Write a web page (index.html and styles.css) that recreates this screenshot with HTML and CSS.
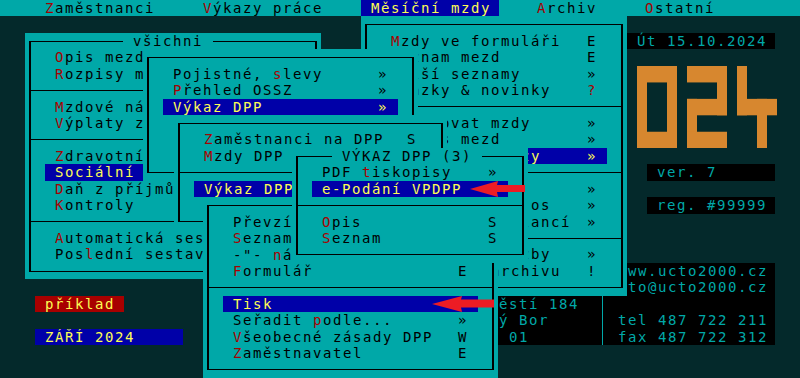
FILE: index.html
```html
<!DOCTYPE html>
<html lang="cs">
<head>
    <meta charset="UTF-8">
    <title>Mzdy - Výkaz DPP</title>
    <link rel="stylesheet" href="styles.css">
</head>
<body>
<div class="screen">
    <nav class="menubar">
        <span class="menu-item"><span class="hot">Z</span>aměstnanci</span>
        <span class="menu-item"><span class="hot">V</span>ýkazy práce</span>
        <span class="menu-item open">Měsíční mzdy</span>
        <span class="menu-item"><span class="hot">A</span>rchiv</span>
        <span class="menu-item"><span class="hot">O</span>statní</span>
    </nav>

    <!-- desktop -->
    <div class="date-box">Út 15.10.2024</div>
    <svg class="logo" viewBox="0 0 14 5" preserveAspectRatio="none">
        <g fill="#d7872f">
            <!-- 0 -->
            <rect x="0" y="0" width="4" height="1"/>
            <rect x="0" y="4" width="4" height="1"/>
            <rect x="0" y="0" width="1" height="5"/>
            <rect x="3" y="0" width="1" height="5"/>
            <!-- 2 -->
            <rect x="5" y="0" width="4" height="1"/>
            <rect x="8" y="0" width="1" height="3"/>
            <rect x="5" y="2" width="4" height="1"/>
            <rect x="5" y="2" width="1" height="3"/>
            <rect x="5" y="4" width="4" height="1"/>
            <!-- 4 -->
            <rect x="10" y="0" width="1" height="3"/>
            <rect x="10" y="2" width="4" height="1"/>
            <rect x="12" y="2" width="1" height="3"/>
        </g>
    </svg>
    <div class="tag tag-ver">ver. 7</div>
    <div class="tag tag-reg">reg. #99999</div>

    <div class="badge badge-example">příklad</div>
    <div class="badge badge-month">ZÁŘÍ 2024</div>

    <div class="info">
        <div class="info-addr">
            <div class="line">ÚČTO 2000</div>
            <div class="line">s.r.o.</div>
            <div class="line">Náměstí 184</div>
            <div class="line">Nový Bor</div>
            <div class="line">473 01</div>
        </div>
        <div class="info-contact">
            <div class="line">www.ucto2000.cz</div>
            <div class="line">ucto@ucto2000.cz</div>
            <div class="line"></div>
            <div class="line">tel 487 722 211</div>
            <div class="line">fax 487 722 312</div>
        </div>
    </div>

    <!-- Měsíční mzdy -->
    <div class="win win-mesicni">
        <div class="frame">
            <div class="item"><span class="lbl"><span class="hot">M</span>zdy ve formuláři</span><span class="key">E</span></div>
            <div class="item"><span class="lbl"><span class="hot">S</span>eznam mezd</span><span class="key">E</span></div>
            <div class="item"><span class="lbl"><span class="hot">D</span>alší seznamy</span><span class="key">»</span></div>
            <div class="item"><span class="lbl"><span class="hot">U</span>kázky &amp; novinky</span><span class="key hot">?</span></div>
            <div class="sep"></div>
            <div class="item"><span class="lbl"><span class="hot">Z</span>pracovat mzdy</span><span class="key">»</span></div>
            <div class="item"><span class="lbl"><span class="hot">R</span>ozpis mezd</span><span class="key">»</span></div>
            <div class="item sel"><span class="lbl">Hromadné výkazy</span><span class="key">»</span></div>
            <div class="sep"></div>
            <div class="item"><span class="lbl"><span class="hot">E</span>xport dat</span><span class="key">»</span></div>
            <div class="item"><span class="lbl">Srážky a záp. os</span><span class="key">»</span></div>
            <div class="item"><span class="lbl">Doklad z ambulancí</span><span class="key">»</span></div>
            <div class="sep"></div>
            <div class="item"><span class="lbl">Systémové služby</span><span class="key">»</span></div>
            <div class="item"><span class="lbl">Přenos do archivu</span><span class="key">!</span></div>
        </div>
    </div>

    <!-- všichni -->
    <div class="win win-vsichni">
        <div class="frame">
            <span class="title">všichni</span>
            <div class="item"><span class="lbl"><span class="hot">O</span>pis mezd</span></div>
            <div class="item"><span class="lbl"><span class="hot">R</span>ozpisy mezd</span></div>
            <div class="sep"></div>
            <div class="item"><span class="lbl"><span class="hot">M</span>zdové náklady</span></div>
            <div class="item"><span class="lbl"><span class="hot">V</span>ýplaty zaměstnancům</span></div>
            <div class="sep"></div>
            <div class="item"><span class="lbl"><span class="hot">Z</span>dravotní pojištění</span></div>
            <div class="item sel"><span class="lbl">Sociální pojištění</span></div>
            <div class="item"><span class="lbl"><span class="hot">D</span>aň z příjmů</span></div>
            <div class="item"><span class="lbl"><span class="hot">K</span>ontroly</span></div>
            <div class="sep"></div>
            <div class="item"><span class="lbl"><span class="hot">A</span>utomatická sestava</span></div>
            <div class="item"><span class="lbl">Pos<span class="hot">l</span>ední sestavy</span></div>
        </div>
    </div>

    <!-- Sociální pojištění -->
    <div class="win win-pojistne">
        <div class="frame">
            <div class="item"><span class="lbl">Pojistné, <span class="hot">s</span>levy</span><span class="key">»</span></div>
            <div class="item"><span class="lbl"><span class="hot">P</span>řehled OSSZ</span><span class="key">»</span></div>
            <div class="item sel"><span class="lbl">Výkaz DPP</span><span class="key">»</span></div>
            <div class="item"></div>
            <div class="item"></div>
            <div class="item"></div>
        </div>
    </div>

    <!-- Výkaz DPP -->
    <div class="win win-dpp">
        <div class="frame">
            <div class="item"><span class="lbl"><span class="hot">Z</span>aměstnanci na DPP</span><span class="key">S</span></div>
            <div class="item"><span class="lbl"><span class="hot">M</span>zdy DPP</span><span class="key">S</span></div>
            <div class="sep"></div>
            <div class="item sel"><span class="lbl">Výkaz DPP</span></div>
            <div class="item"></div>
        </div>
    </div>

    <!-- tisk výkazu -->
    <div class="win win-tisk">
        <div class="frame">
            <div class="item"><span class="lbl">Převzít údaje</span></div>
            <div class="item"><span class="lbl"><span class="hot">S</span>eznam</span></div>
            <div class="item"><span class="lbl">-"- <span class="hot">n</span>áhled</span></div>
            <div class="item"><span class="lbl"><span class="hot">F</span>ormulář</span><span class="key">E</span></div>
            <div class="sep"></div>
            <div class="item sel"><span class="lbl">Tisk</span></div>
            <div class="item"><span class="lbl">Seřadit <span class="hot">p</span>odle...</span><span class="key">»</span></div>
            <div class="item"><span class="lbl"><span class="hot">V</span>šeobecné zásady DPP</span><span class="key">W</span></div>
            <div class="item"><span class="lbl"><span class="hot">Z</span>aměstnavatel</span><span class="key">E</span></div>
        </div>
    </div>

    <!-- VÝKAZ DPP (3) -->
    <div class="win win-vykaz">
        <div class="frame">
            <span class="title">VÝKAZ DPP (3)</span>
            <div class="item"><span class="lbl">PDF <span class="hot">t</span>iskopisy</span><span class="key">»</span></div>
            <div class="item sel"><span class="lbl">e-Podání VPDPP</span></div>
            <div class="sep"></div>
            <div class="item"><span class="lbl"><span class="hot">O</span>pis</span><span class="key">S</span></div>
            <div class="item"><span class="lbl"><span class="hot">S</span>eznam</span><span class="key">S</span></div>
        </div>
    </div>

    <svg class="arrow arrow-podani" viewBox="0 0 55 16">
        <polygon points="0,8 28,0 27,4 55,4 55,11 27,11 28,16"/>
    </svg>
    <svg class="arrow arrow-tisk" viewBox="0 0 62 16">
        <polygon points="0,8 30,0 29,3.5 62,3.5 62,11.5 29,11.5 30,16"/>
    </svg>
</div>
</body>
</html>
```

FILE: styles.css
```css
:root {
    --h: 16.435px;
    --cyan: #00a8a8;
    --dark: #04292b;
    --blue: #0000a8;
    --yellow: #fcfc54;
    --red: #a80000;
}

* {
    margin: 0;
    padding: 0;
    box-sizing: border-box;
}

body {
    background: var(--dark);
    color: #000;
    font-family: "DejaVu Sans Mono", monospace;
    font-size: 14px;
    letter-spacing: 1.571px;
    line-height: var(--h);
}

.screen {
    position: relative;
    width: 800px;
    height: 378px;
    overflow: hidden;
    background: var(--dark);
}

.hot {
    color: var(--red);
}

/* top menu */
.menubar {
    display: flex;
    gap: 28px;
    height: var(--h);
    padding-left: 35px;
    background: var(--cyan);
}

.menu-item {
    padding: 0 10px;
    white-space: pre;
}

.menu-item.open {
    padding: 0 8px 0 10px;
    background: var(--blue);
    color: var(--yellow);
}

/* windows */
.win {
    position: absolute;
    padding: 7.72px 4px;
    background: var(--cyan);
}

.frame {
    position: relative;
    border: solid #000;
    border-width: 1px 2px;
    padding: 7.72px 14px;
}

.title {
    position: absolute;
    top: -8.72px;
    height: var(--h);
    padding: 0 10px;
    background: var(--cyan);
    white-space: pre;
}

.item {
    display: flex;
    height: var(--h);
    padding: 0 10px;
    white-space: pre;
}

.item .lbl {
    flex: 1;
    overflow: hidden;
}

.item .key {
    width: 10px;
    flex: none;
}

.item.sel {
    background: var(--blue);
    color: var(--yellow);
}

.sep {
    position: relative;
    height: var(--h);
    margin: 0 -14px;
}

.sep::before {
    content: "";
    position: absolute;
    left: 0;
    right: 0;
    top: calc(50% - 0.5px);
    height: 1px;
    background: #000;
}

.win-mesicni {
    left: 361px;
    top: var(--h);
    width: 266px;
}

.win-vsichni {
    left: 25px;
    top: calc(var(--h) * 2);
    width: 296px;
}

.win-vsichni .title {
    left: 92px;
}

.win-pojistne {
    left: 143px;
    top: calc(var(--h) * 3);
    width: 275px;
}

.win-dpp {
    left: 174px;
    top: calc(var(--h) * 7);
    width: 273px;
}

.win-tisk {
    left: 203px;
    top: calc(var(--h) * 12);
    width: 295px;
}

.win-vykaz {
    left: 292px;
    top: calc(var(--h) * 9);
    width: 236px;
}

.win-vykaz .title {
    left: 34px;
}

/* right side of the desktop */
.date-box, .tag {
    position: absolute;
    height: var(--h);
    padding-left: 10px;
    background: #000;
    color: var(--cyan);
    white-space: pre;
}

.date-box {
    left: 627px;
    top: calc(var(--h) * 2);
    width: 148px;
}

.tag {
    left: 647px;
    width: 128px;
}

.tag-ver {
    top: calc(var(--h) * 10);
}

.tag-reg {
    top: calc(var(--h) * 12);
}

.logo {
    position: absolute;
    left: 637px;
    top: calc(var(--h) * 4);
    width: 140px;
    height: calc(var(--h) * 5);
}

.badge {
    position: absolute;
    left: 35px;
    height: var(--h);
    padding-left: 10px;
    color: var(--yellow);
    white-space: pre;
}

.badge-example {
    top: calc(var(--h) * 18);
    width: 89px;
    background: var(--red);
}

.badge-month {
    top: calc(var(--h) * 20);
    width: 148px;
    background: var(--blue);
}

.info {
    position: absolute;
    left: 459px;
    top: calc(var(--h) * 16);
    width: 316px;
    display: flex;
    background: #000;
    color: var(--cyan);
}

.info .line {
    height: var(--h);
    white-space: pre;
}

.info-addr {
    width: 143px;
    padding-left: 10px;
}

.info-contact {
    flex: 1;
    border-left: 1px solid var(--cyan);
    padding-right: 7px;
    text-align: right;
}

.arrow {
    position: absolute;
    fill: #ec1c24;
}

.arrow-podani {
    left: 470px;
    top: 181px;
    width: 55px;
    height: 16px;
}

.arrow-tisk {
    left: 432px;
    top: 296px;
    width: 62px;
    height: 16px;
}
```
